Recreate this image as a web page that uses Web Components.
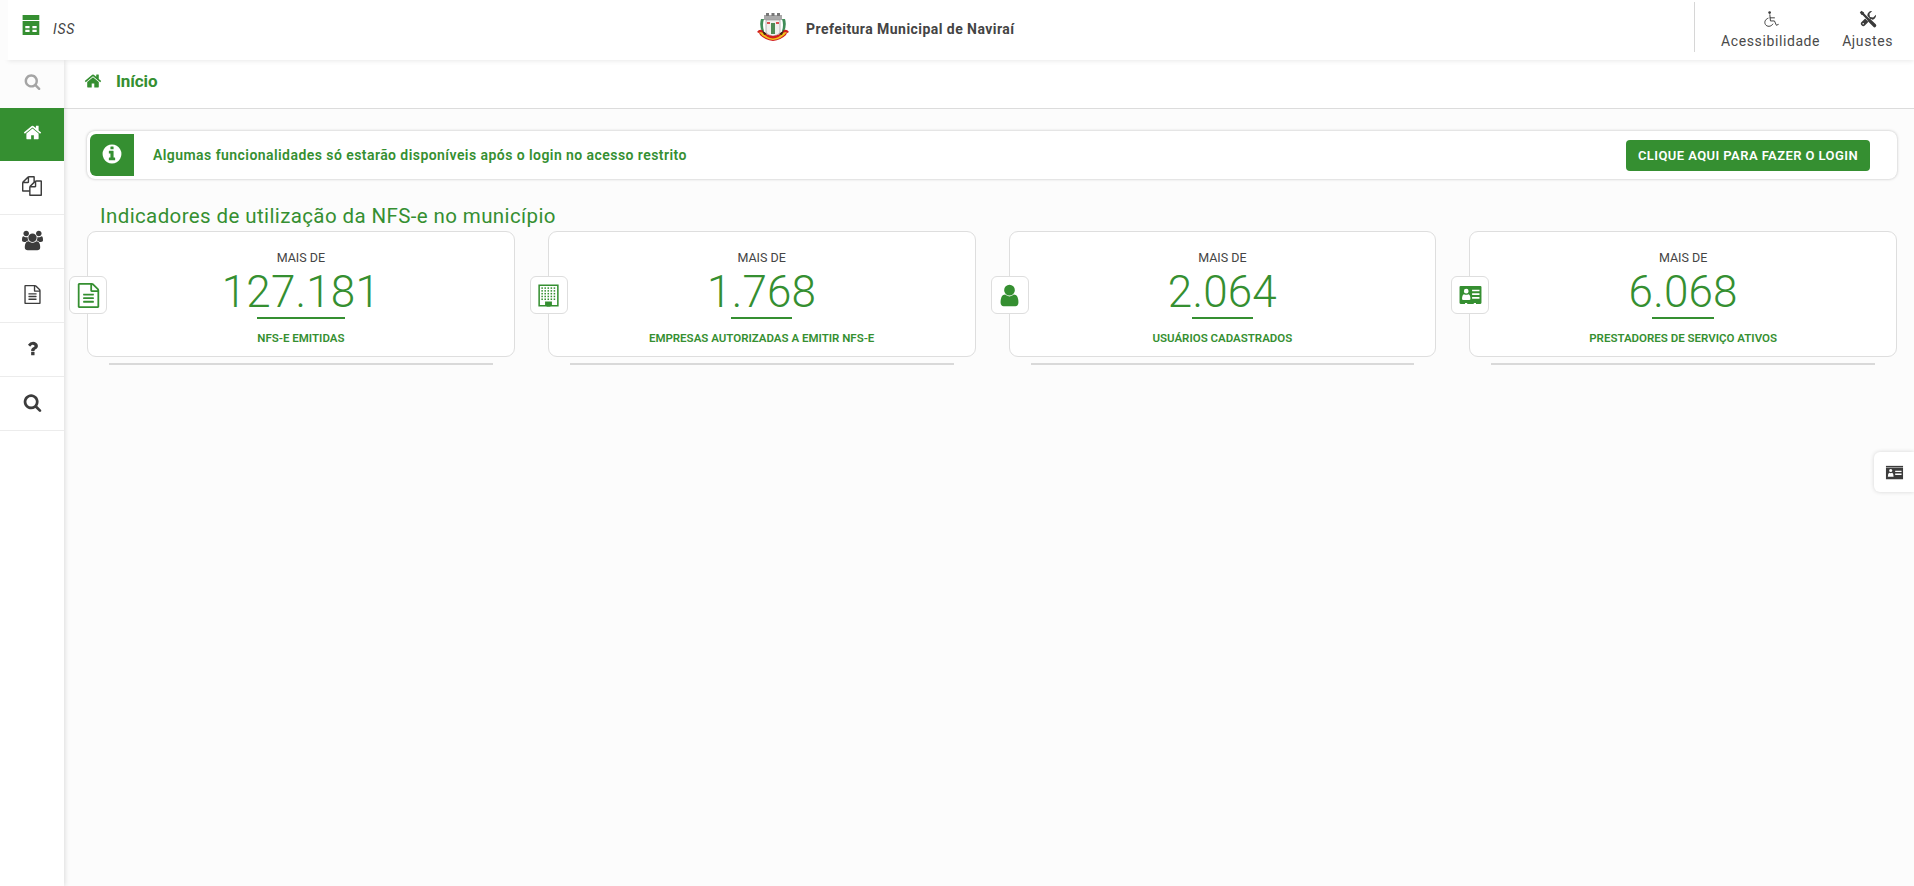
<!DOCTYPE html>
<html lang="pt-BR">
<head>
<meta charset="utf-8">
<title>ISS - Prefeitura Municipal de Naviraí</title>
<style>
    html, body { margin: 0; height: 100%; background: #fcfcfc; overflow: hidden; }
    body { font-family: Roboto, "Liberation Sans", sans-serif; color: #444; }
</style>
</head>
<body>
<iss-app>
    <top-bar slot="top"></top-bar>
    <side-nav slot="side">
        <side-item icon="search" kind="search"></side-item>
        <side-item icon="home" active></side-item>
        <side-item icon="copies"></side-item>
        <side-item icon="users"></side-item>
        <side-item icon="file"></side-item>
        <side-item icon="question"></side-item>
        <side-item icon="search"></side-item>
    </side-nav>
    <page-crumb>Início</page-crumb>
    <login-alert>Algumas funcionalidades só estarão disponíveis após o login no acesso restrito</login-alert>
    <section-title>Indicadores de utilização da NFS-e no município</section-title>
    <stat-row>
        <stat-card icon="file" value="127.181" label="NFS-E EMITIDAS" bar="88"></stat-card>
        <stat-card icon="building" value="1.768" label="EMPRESAS AUTORIZADAS A EMITIR NFS-E" bar="61"></stat-card>
        <stat-card icon="user" value="2.064" label="USUÁRIOS CADASTRADOS" bar="61"></stat-card>
        <stat-card icon="idcard" value="6.068" label="PRESTADORES DE SERVIÇO ATIVOS" bar="62"></stat-card>
    </stat-row>
    <side-tab slot="overlay"></side-tab>
</iss-app>

<script>
const FA = {
    search: `<path d="M1216 832q0-185-131.5-316.5t-316.5-131.5-316.5 131.5-131.5 316.5 131.5 316.5 316.5 131.5 316.5-131.5 131.5-316.5zm512 832q0 52-38 90t-90 38q-54 0-90-38l-343-342q-179 124-399 124-143 0-273.5-55.5t-225-150-150-225-55.5-273.5 55.5-273.5 150-225 225-150 273.5-55.5 273.5 55.5 225 150 150 225 55.5 273.5q0 220-124 399l343 343q37 37 37 90z"/>`,
    home: `<path d="M1472 992v480q0 26-19 45t-45 19h-384v-384h-256v384h-384q-26 0-45-19t-19-45v-480q0-1 .5-3t.5-3l575-474 575 474q1 2 1 6zm223-69l-62 74q-8 9-21 11h-3q-13 0-21-7l-692-577-692 577q-12 8-24 7-13-2-21-11l-62-74q-8-10-7-23.5t11-21.5l719-599q32-26 76-26t76 26l244 204v-195q0-14 9-23t23-9h192q14 0 23 9t9 23v408l219 182q10 8 11 21.5t-7 23.5z"/>`,
    info: `<path d="M1152 1376v-160q0-14-9-23t-23-9h-96v-512q0-14-9-23t-23-9h-320q-14 0-23 9t-9 23v160q0 14 9 23t23 9h96v320h-96q-14 0-23 9t-9 23v160q0 14 9 23t23 9h448q14 0 23-9t9-23zm-128-896v-160q0-14-9-23t-23-9h-192q-14 0-23 9t-9 23v160q0 14 9 23t23 9h192q14 0 23-9t9-23zm640 416q0 209-103 385.5t-279.5 279.5-385.5 103-385.5-103-279.5-279.5-103-385.5 103-385.5 279.5-279.5 385.5-103 385.5 103 279.5 279.5 103 385.5z"/>`,
    user: `<path d="M1536 1399q0 109-62.5 187t-150.5 78h-854q-88 0-150.5-78t-62.5-187q0-85 8.5-160.5t31.5-152 58.5-131 94-89 134.5-34.5q131 128 313 128t313-128q76 0 134.5 34.5t94 89 58.5 131 31.5 152 8.5 160.5zm-256-887q0 159-112.5 271.5t-271.5 112.5-271.5-112.5-112.5-271.5 112.5-271.5 271.5-112.5 271.5 112.5 112.5 271.5z"/>`,
    users: `<path d="M593 896q-162 5-265 128h-134q-82 0-138-40.5t-56-118.5q0-353 124-353 6 0 43.5 21t97.5 42.5 119 21.5q67 0 133-23-5 37-5 66 0 139 81 256zm1071 637q0 120-73 189.5t-194 69.5h-874q-121 0-194-69.5t-73-189.5q0-53 3.5-103.5t14-109 26.5-108.5 43-97.5 62-81 85.5-53.5 111.5-20q10 0 43 21.5t73 48 107 48 135 21.5 135-21.5 107-48 73-48 43-21.5q61 0 111.5 20t85.5 53.5 62 81 43 97.5 26.5 108.5 14 109 3.5 103.5zm-1024-1277q0 106-75 181t-181 75-181-75-75-181 75-181 181-75 181 75 75 181zm704 384q0 159-112.5 271.5t-271.5 112.5-271.5-112.5-112.5-271.5 112.5-271.5 271.5-112.5 271.5 112.5 112.5 271.5zm576 225q0 78-56 118.5t-138 40.5h-134q-103-123-265-128 81-117 81-256 0-29-5-66 66 23 133 23 59 0 119-21.5t97.5-42.5 43.5-21q124 0 124 353zm-128-609q0 106-75 181t-181 75-181-75-75-181 75-181 181-75 181 75 75 181z"/>`,
    question: `<path d="M1088 1256v240q0 16-12 28t-28 12h-240q-16 0-28-12t-12-28v-240q0-16 12-28t28-12h240q16 0 28 12t12 28zm316-600q0 54-15.5 101t-35 76.5-55 59.5-57.5 43.5-61 35.5q-41 23-68.5 65t-27.5 67q0 17-12 32.5t-28 15.5h-240q-15 0-25.5-18.5t-10.5-37.5v-45q0-83 65-156.5t143-108.5q59-27 84-56t25-76q0-42-46.5-74t-107.5-32q-65 0-108 29-35 25-107 115-13 16-31 16-12 0-25-8l-164-125q-13-10-15.5-25t5.5-28q160-266 464-266 80 0 161 31t146 83 106 127.5 41 158.5z"/>`,
    file: `<path d="M1596 380q28 28 48 76t20 88v1152q0 40-28 68t-68 28h-1344q-40 0-68-28t-28-68v-1600q0-40 28-68t68-28h896q40 0 88 20t76 48zm-444-244v376h376q-10-29-22-41l-313-313q-12-12-41-22zm384 1528v-1024h-416q-40 0-68-28t-28-68v-416h-768v1536h1280zm-1024-864q0-14 9-23t23-9h704q14 0 23 9t9 23v64q0 14-9 23t-23 9h-704q-14 0-23-9t-9-23v-64zm736 224q14 0 23 9t9 23v64q0 14-9 23t-23 9h-704q-14 0-23-9t-9-23v-64q0-14 9-23t23-9h704zm0 256q14 0 23 9t9 23v64q0 14-9 23t-23 9h-704q-14 0-23-9t-9-23v-64q0-14 9-23t23-9h704z"/>`,
    copies: `<path d="M1696 384q40 0 68 28t28 68v1216q0 40-28 68t-68 28h-960q-40 0-68-28t-28-68v-288h-544q-40 0-68-28t-28-68v-672q0-40 20-88t48-76l408-408q28-28 76-48t88-20h416q40 0 68 28t28 68v328q68-40 128-40h416zm-544 213l-299 299h299v-299zm-640-384l-299 299h299v-299zm194 647l316-316v-416h-384v416q0 40-28 68t-68 28h-416v640h512v-256q0-40 20-88t48-76zm956 804v-1152h-384v416q0 40-28 68t-68 28h-416v640h896z"/>`,
    building: `<path fill-rule="evenodd" d="M170 100H1622V1692H170ZM280 210V1580H650V1330H1142V1580H1512V210Z"/><g>${[0,1,2,3,4].map(r => [0,1,2,3,4].map(c => `<rect x="${385 + c * 220}" y="${310 + r * 200}" width="110" height="110"/>`).join("")).join("")}</g><rect x="760" y="1440" width="272" height="252"/>`,
    idcard: `<path fill-rule="evenodd" d="M110 280Q110 210 190 210H1602Q1682 210 1682 280V1420Q1682 1500 1602 1500H1290V1440H1130V1500H660V1440H500V1500H190Q110 1500 110 1420ZM590 420A170 170 0 1 0 590 760A170 170 0 1 0 590 420ZM290 1140Q290 860 430 800Q590 880 750 800Q890 860 890 1140Q890 1220 800 1220H380Q290 1220 290 1140ZM1010 480V600H1540V480ZM1010 740V860H1540V740ZM1010 1000V1120H1540V1000Z"/>`,
    idsmall: `<rect x="90" y="270" width="1612" height="110"/><path fill-rule="evenodd" d="M90 430H1702V1540H90ZM540 560A150 150 0 1 0 540 860A150 150 0 1 0 540 560ZM270 1290Q270 1000 400 930Q540 1000 680 930Q810 1000 810 1290ZM960 720V850H1560V720ZM960 1000V1130H1560V1000Z"/>`,
    table: `<path fill-rule="evenodd" d="M269 149H1516V523H269ZM269 597H1516V1643H269ZM470 970V1145H790V970ZM1000 970V1145H1320V970ZM470 1247V1419H790V1247ZM1000 1247V1419H1320V1247Z"/>`,
    wheelchair: `<g fill="none" stroke="currentColor" stroke-width="95" stroke-linecap="round" stroke-linejoin="round"><path d="M780 470 L840 1090 H1240 L1430 1520 L1620 1440"/><path d="M810 780 H1240"/><path d="M600 820 C300 930 210 1220 340 1440 C490 1690 900 1700 1080 1400"/></g><circle cx="760" cy="260" r="135"/>`,
    tools: `<path d="M1310 110L1040 380L1090 700L1410 750L1690 470A420 420 0 0 1 1180 950L600 1530A220 220 0 0 1 260 1190L840 610A420 420 0 0 1 1310 110Z"/><circle cx="415" cy="1375" r="75" fill="#fff"/><path d="M300 300L1000 1000" stroke="#fff" stroke-width="330"/><path d="M80 240L240 80L500 260L510 350L1110 950L950 1110L350 510L260 500Z"/><path d="M1030 1030L1560 1560" stroke="#fff" stroke-width="470"/><path d="M1030 1030L1550 1550" stroke="currentColor" stroke-width="340" stroke-linecap="round"/>`
};

// viewBox proprio so pra quem passa da largura padrao
const FA_BOX = { users: "0 0 1920 1792" };

// icones no grid do font-awesome 4
class UiIcon extends HTMLElement {
    connectedCallback() {
        const size = this.getAttribute("size") || 16;
        const name = this.getAttribute("name");
        this.attachShadow({ mode: "open" }).innerHTML = `
            <style>
                :host { display: inline-flex; line-height: 0; }
                svg { display: block; fill: currentColor; }
            </style>
            <svg width="${size}" height="${size}" viewBox="${FA_BOX[name] || "0 0 1792 1792"}">${FA[name]}</svg>
        `;
    }
}

class IssApp extends HTMLElement {
    constructor() {
        super();
        this.attachShadow({ mode: "open" }).innerHTML = `
            <style>
                :host {
                    display: grid;
                    grid-template-columns: 64px 1fr;
                    grid-template-rows: 60px 1fr;
                    height: 100vh;
                    overflow: hidden;
                }
                .top { grid-column: 1 / 3; position: relative; z-index: 3; }
                .side { position: relative; z-index: 2; }
                main { min-width: 0; display: flex; flex-direction: column; }
            </style>
            <div class="top"><slot name="top"></slot></div>
            <div class="side"><slot name="side"></slot></div>
            <main><slot></slot></main>
            <slot name="overlay"></slot>
        `;
    }
}

class TopBar extends HTMLElement {
    constructor() {
        super();
        this.attachShadow({ mode: "open" }).innerHTML = `
            <style>
                :host {
                    display: grid;
                    grid-template-columns: 748px auto 1fr;
                    align-items: center;
                    height: 60px;
                    box-sizing: border-box;
                    margin-left: 8px;
                    background: #fff;
                    box-shadow: -8px 0 0 #fcfcfc, 0 1px 5px rgba(0, 0, 0, 0.09);
                }
                .brand { display: flex; align-items: center; color: #358f31; padding-left: 11px; }
                .brand ui-icon { margin-top: -10px; }
                .brand span { margin-left: 10px; margin-top: -2px; color: #444; font-style: italic; font-size: 14px; letter-spacing: 0.7px; }
                .city { display: flex; align-items: center; gap: 16px; font-size: 14px; font-weight: 700; color: #444; letter-spacing: 0.45px; }
                .city svg { margin-top: -6px; filter: blur(0.4px); }
                .city span { margin-top: -2px; }
                .right { display: flex; justify-content: flex-end; height: 50px; margin-top: -7px; align-self: center; }
                .tools { display: flex; border-left: 1px solid #d6d6d6; padding-right: 21px; padding-left: 26px; gap: 22px; }
                .tool { display: flex; flex-direction: column; align-items: center; padding-top: 8px; gap: 3px; font-size: 14px; color: #4a4a4a; letter-spacing: 0.6px; line-height: 20px; }
                .tool ui-icon { color: #3a3a3a; }
            </style>
            <div class="brand"><ui-icon name="table" size="24"></ui-icon><span>ISS</span></div>
            <div class="city">
                <svg width="34" height="30" viewBox="0 0 34 30">
                    <path d="M8 3h18v5H8z" fill="#a9a9a9"/>
                    <path d="M10 1h3v3h-3zM15.5 1h3v3h-3zM21 1h3v3h-3z" fill="#777"/>
                    <path d="M10 8h14v11q0 4-7 5q-7-1-7-5z" fill="#f0f0ee" stroke="#999" stroke-width=".7"/>
                    <path d="M15 11h4v11h-4z" fill="#4f8a55"/>
                    <path d="M11 10h3v2h-3zM20 10h3v2h-3z" fill="#d85050"/>
                    <path d="M5 7q-2 6 1 13l2-1q-2-6 0-12zM29 7q2 6-1 13l-2-1q2-6 0-12z" fill="#3f8d58"/>
                    <path d="M1 20q2-3 5-2q3 5 11 6q8-1 11-6q3-1 5 2q-3 1-3 3q-5 5-13 6q-8-1-13-6q0-2-3-3z" fill="#d11f1f"/>
                    <path d="M3 20q3 0 4 1q4 5 10 5.5q6-.5 10-5.5q1-1 4-1q-5 7-14 8q-9-1-14-8z" fill="#f2c21b"/>
                    <path d="M6 18q4 3 5 4l-3 1zM28 18q-4 3-5 4l3 1z" fill="#3d2413"/>
                </svg>
                <span>Prefeitura Municipal de Naviraí</span>
            </div>
            <div class="right">
                <div class="tools">
                    <div class="tool"><ui-icon name="wheelchair" size="18"></ui-icon>Acessibilidade</div>
                    <div class="tool"><ui-icon name="tools" size="18"></ui-icon>Ajustes</div>
                </div>
            </div>
        `;
    }
}

class SideNav extends HTMLElement {
    constructor() {
        super();
        this.attachShadow({ mode: "open" }).innerHTML = `
            <style>
                :host {
                    display: flex;
                    flex-direction: column;
                    height: 100%;
                    background: #fff;
                    box-shadow: 1px 0 5px rgba(0, 0, 0, 0.13);
                }
            </style>
            <slot></slot>
        `;
    }
}

class SideItem extends HTMLElement {
    connectedCallback() {
        const isSearch = this.getAttribute("kind") === "search";
        const active = this.hasAttribute("active");
        const color = active ? "#fff" : isSearch ? "#a5a5a5" : "#3c3c3c";
        const name = this.getAttribute("icon");
        const size = isSearch ? 17 : name === "copies" ? 20 : name === "users" ? 21 : 19;
        this.attachShadow({ mode: "open" }).innerHTML = `
            <style>
                :host {
                    display: flex;
                    align-items: center;
                    justify-content: center;
                    box-sizing: border-box;
                    height: ${isSearch ? 48 : active ? 53 : 54}px;
                    padding-bottom: ${isSearch ? 6 : active ? 5 : 3}px;
                    border-bottom: ${active || isSearch ? "0" : "1px solid #ececec"};
                    background: ${active ? "#358f31" : isSearch ? "#fcfcfc" : "#fff"};
                    color: ${color};
                }
            </style>
            <ui-icon name="${name}" size="${size}"></ui-icon>
        `;
    }
}

class PageCrumb extends HTMLElement {
    constructor() {
        super();
        this.attachShadow({ mode: "open" }).innerHTML = `
            <style>
                :host {
                    display: flex;
                    align-items: center;
                    flex: none;
                    box-sizing: border-box;
                    height: 49px;
                    padding: 0 0 6px 20px;
                    background: #fff;
                    border-bottom: 1px solid #dcdcdc;
                    color: #358f31;
                    font-size: 17px;
                    font-weight: 700;
                    letter-spacing: -0.1px;
                }
                ui-icon { margin-right: 14px; }
            </style>
            <ui-icon name="home" size="18"></ui-icon><slot></slot>
        `;
    }
}

class LoginAlert extends HTMLElement {
    constructor() {
        super();
        this.attachShadow({ mode: "open" }).innerHTML = `
            <style>
                :host {
                    display: flex;
                    align-items: center;
                    flex: none;
                    box-sizing: border-box;
                    height: 48px;
                    margin: 22px 17px 0 23px;
                    padding: 3px 27px 3px 3px;
                    background: #fff;
                    border-radius: 8px;
                    box-shadow: 0 0 3px rgba(0, 0, 0, 0.26);
                    color: #358f31;
                    font-size: 14px;
                    font-weight: 600;
                    letter-spacing: 0.44px;
                }
                .mark {
                    display: flex;
                    align-items: center;
                    justify-content: center;
                    width: 44px;
                    height: 42px;
                    padding-bottom: 2px;
                    box-sizing: border-box;
                    background: #358f31;
                    border-radius: 6px 0 0 6px;
                    color: #fff;
                }
                .text { flex: 1; margin-left: 19px; }
                button {
                    width: 244px;
                    height: 31px;
                    padding: 0;
                    border: 0;
                    border-radius: 4px;
                    background: #358f31;
                    color: #fff;
                    font: 600 13px Roboto, "Liberation Sans", sans-serif;
                    letter-spacing: 0.42px;
                }
            </style>
            <div class="mark"><ui-icon name="info" size="22"></ui-icon></div>
            <div class="text"><slot></slot></div>
            <button>CLIQUE AQUI PARA FAZER O LOGIN</button>
        `;
    }
}

class SectionTitle extends HTMLElement {
    constructor() {
        super();
        this.attachShadow({ mode: "open" }).innerHTML = `
            <style>
                :host {
                    display: block;
                    flex: none;
                    margin: 24px 16px 1px 36px;
                    color: #358f31;
                    font-size: 20.5px;
                    font-weight: 380;
                    line-height: 27px;
                    letter-spacing: 0.39px;
                }
            </style>
            <slot></slot>
        `;
    }
}

class StatRow extends HTMLElement {
    constructor() {
        super();
        this.attachShadow({ mode: "open" }).innerHTML = `
            <style>
                :host {
                    display: grid;
                    grid-template-columns: repeat(4, 1fr);
                    column-gap: 33px;
                    flex: none;
                    margin: 0 17px 0 23px;
                }
            </style>
            <slot></slot>
        `;
    }
}

class StatCard extends HTMLElement {
    connectedCallback() {
        this.attachShadow({ mode: "open" }).innerHTML = `
            <style>
                :host { display: block; }
                .card {
                    position: relative;
                    display: flex;
                    flex-direction: column;
                    align-items: center;
                    box-sizing: border-box;
                    height: 126px;
                    padding-top: 18px;
                    background: #fff;
                    border: 1px solid #dedede;
                    border-radius: 9px;
                }
                .more { font-size: 12.5px; line-height: 16px; color: #444; }
                .value {
                    margin-top: 3px;
                    font-size: 44px;
                    font-weight: 300;
                    line-height: 46px;
                    letter-spacing: 0.2px;
                    color: #358f31;
                }
                .bar { width: ${this.getAttribute("bar")}px; height: 2px; margin-top: 2px; background: #358f31; }
                .label {
                    margin-top: 12px;
                    font-size: 11.5px;
                    font-weight: 600;
                    line-height: 14px;
                    color: #358f31;
                }
                .badge {
                    position: absolute;
                    left: -19px;
                    top: 44px;
                    display: flex;
                    align-items: center;
                    justify-content: center;
                    width: 38px;
                    height: 38px;
                    box-sizing: border-box;
                    background: #fff;
                    border: 1px solid #dedede;
                    border-radius: 6px;
                    color: #358f31;
                }
                .rule { height: 2px; margin: 6px 22px 0; background: #d9d9d9; }
            </style>
            <div class="card">
                <div class="badge"><ui-icon name="${this.getAttribute("icon")}" size="25"></ui-icon></div>
                <div class="more">MAIS DE</div>
                <div class="value">${this.getAttribute("value")}</div>
                <div class="bar"></div>
                <div class="label">${this.getAttribute("label")}</div>
            </div>
            <div class="rule"></div>
        `;
    }
}

class SideTab extends HTMLElement {
    constructor() {
        super();
        this.attachShadow({ mode: "open" }).innerHTML = `
            <style>
                :host {
                    position: absolute;
                    right: 0;
                    top: 452px;
                    z-index: 4;
                    display: flex;
                    align-items: center;
                    justify-content: center;
                    width: 40px;
                    height: 40px;
                    background: #fff;
                    border-radius: 6px 0 0 6px;
                    box-shadow: 0 0 4px rgba(0, 0, 0, 0.16);
                    color: #3c3c3c;
                }
            </style>
            <ui-icon name="idsmall" size="19"></ui-icon>
        `;
    }
}

customElements.define("ui-icon", UiIcon);
customElements.define("iss-app", IssApp);
customElements.define("top-bar", TopBar);
customElements.define("side-nav", SideNav);
customElements.define("side-item", SideItem);
customElements.define("page-crumb", PageCrumb);
customElements.define("login-alert", LoginAlert);
customElements.define("section-title", SectionTitle);
customElements.define("stat-row", StatRow);
customElements.define("stat-card", StatCard);
customElements.define("side-tab", SideTab);
</script>
</body>
</html>
